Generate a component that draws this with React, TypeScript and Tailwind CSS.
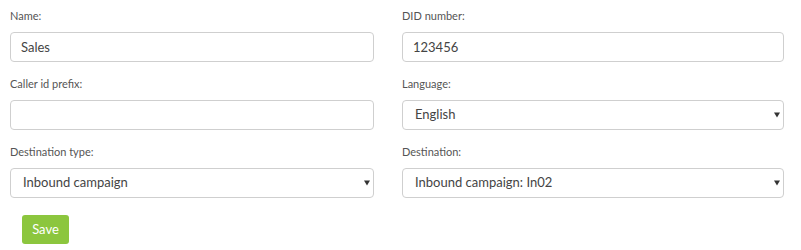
import React from "react";

const font = { fontFamily: "Lato, 'Open Sans', sans-serif" };

function Label({ children }: { children: React.ReactNode }) {
  return (
    <div className="text-[11px] leading-[16px] text-[#555555] mb-[8px]">{children}</div>
  );
}

function TextInput({ value }: { value: string }) {
  return (
    <input
      readOnly
      value={value}
      className="block w-full h-[30px] rounded-[4px] border border-[#cfcfcf] bg-white px-[10px] text-[13px] text-[#444444] outline-none"
      style={font}
    />
  );
}

function Select({ value }: { value: string }) {
  return (
    <div className="relative">
      <select
        value={value}
        onChange={() => {}}
        className="block w-full h-[30px] appearance-none rounded-[4px] border border-[#cfcfcf] bg-white pl-[12px] pr-[24px] text-[13px] text-[#444444] outline-none"
        style={font}
      >
        <option value={value}>{value}</option>
      </select>
      <svg
        className="pointer-events-none absolute right-[4px] top-[12px]"
        width="6"
        height="6"
        viewBox="0 0 6 6"
      >
        <path d="M0 0.5 H6 L3 5.5 Z" fill="#333333" />
      </svg>
    </div>
  );
}

function Field({ label, children }: { label: string; children: React.ReactNode }) {
  return (
    <div className="mb-[14px]">
      <Label>{label}</Label>
      {children}
    </div>
  );
}

export default function App() {
  return (
    <div className="w-[801px] h-[250px] bg-white pt-[8px] pl-[10px]" style={font}>
      <div className="flex gap-[28px]">
        <div className="w-[364px]">
          <Field label="Name:">
            <TextInput value="Sales" />
          </Field>
          <Field label="Caller id prefix:">
            <TextInput value="" />
          </Field>
          <Field label="Destination type:">
            <Select value="Inbound campaign" />
          </Field>
        </div>
        <div className="w-[382px]">
          <Field label="DID number:">
            <TextInput value="123456" />
          </Field>
          <Field label="Language:">
            <Select value="English" />
          </Field>
          <Field label="Destination:">
            <Select value="Inbound campaign: In02" />
          </Field>
        </div>
      </div>
      <div className="pl-[12px] pt-[3px]">
        <button className="h-[29px] w-[47px] rounded-[3px] bg-[#8cc63e] text-[13px] text-white" style={font}>
          Save
        </button>
      </div>
    </div>
  );
}
